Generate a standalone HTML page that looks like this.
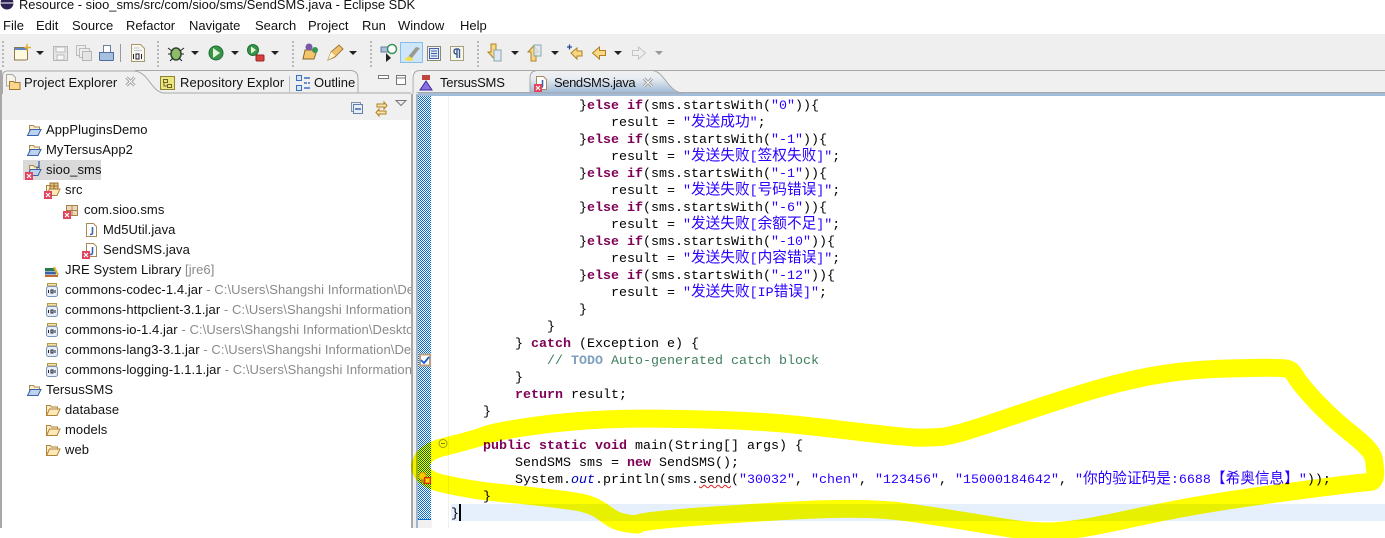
<!DOCTYPE html>
<html><head><meta charset="utf-8"><style>
html,body{margin:0;padding:0;width:1385px;height:538px;overflow:hidden;background:#fff}
body{position:relative;font-family:"Liberation Sans","Noto Sans CJK SC",sans-serif;font-size:13px;color:#111}
.a{position:absolute;white-space:pre;line-height:18px}
.t{position:absolute;white-space:pre;line-height:20px;font-size:13px;letter-spacing:.08px}
.t i{font-style:normal;color:#8a8a8a}
.c{position:absolute;white-space:pre;line-height:17px;height:17px;margin-top:1px;font-family:"Liberation Mono",monospace;font-size:13.33px;color:#000}
.c b{color:#7f0055;font-weight:bold}
.c s{color:#2a00ff;text-decoration:none}
.c u{font-family:"Noto Sans CJK SC",sans-serif;font-size:14.67px;text-decoration:none;color:#2a00ff;line-height:0}
.c em{color:#0000c0}
svg{position:absolute;left:0;top:0}
</style></head><body>
<div style="position:absolute;left:0;top:34px;width:1385px;height:36px;background:#efefef"></div>
<div style="position:absolute;left:0;top:70px;width:412px;height:50px;background:#f0f0f0"></div>
<div style="position:absolute;left:416px;top:70px;width:969px;height:24px;background:#f0f0f0"></div>
<div style="position:absolute;left:413px;top:70px;width:3px;height:458px;background:#efefef"></div>
<div style="position:absolute;left:0;top:70px;width:2px;height:458px;background:#a8a8a8"></div>
<div style="position:absolute;left:411px;top:94px;width:2px;height:434px;background:#a8a8a8"></div>
<div style="position:absolute;left:416px;top:94px;width:2px;height:434px;background:#a3b5ca"></div>
<div style="position:absolute;left:418px;top:93px;width:967px;height:3px;background:#a3bcd9"></div>
<div style="position:absolute;left:418px;top:520px;width:13px;height:8px;background:#f0f0f0"></div>
<div style="position:absolute;left:418px;top:519px;width:13px;height:1px;background:#0a6ad6"></div>
<div style="position:absolute;left:431px;top:96px;width:1px;height:432px;background:#f4f4f4"></div>
<div style="position:absolute;left:448px;top:96px;width:1px;height:432px;background:#efefef"></div>
<div style="position:absolute;left:451px;top:504px;width:934px;height:17px;background:#e6f0fc"></div>
<div style="position:absolute;left:459px;top:504px;width:2px;height:17px;background:#000"></div>
<div style="position:absolute;left:23px;top:160px;width:78px;height:20px;background:#d9d9d9"></div>

<svg width="1385" height="538" viewBox="0 0 1385 538">
<defs>
<pattern id="chk" x="0" y="0" width="2" height="2" patternUnits="userSpaceOnUse"><rect width="2" height="2" fill="#fff"/><rect width="1" height="1" fill="#0a6ad6"/><rect x="1" y="1" width="1" height="1" fill="#0a6ad6"/></pattern>
<g id="err"><rect width="8" height="8" fill="#e2425c"/><path d="M2 2l4 4M6 2l-4 4" stroke="#fff" stroke-width="1.2"/></g>
<g id="fo"><path d="M1.500 13.500V3.500h4l1 1.500h6v2" fill="#fbeecb" stroke="#b3813a"/><path d="M1.500 13.500l3-6.500h10.500l-3 6.500z" fill="#fde9b8" stroke="#b3813a"/></g>
<g id="pf"><path d="M3.500 12V3.500h4l1 1.500h5v2" fill="#fbeecb" stroke="#a88850"/><path d="M1.500 13.500l3-6h10.500l-3 6z" fill="#bcd3f0" stroke="#3a62a8"/></g>
<g id="jar"><rect x="2.500" y="1.500" width="9" height="2.500" fill="#f2dfa8" stroke="#b59a52"/><rect x="1.500" y="4.500" width="11" height="10" rx="2" fill="#e6eef8" stroke="#7f94b0"/><path d="M3.500 8v3M6 8v3h2V8zM10 8v3" stroke="#223" fill="none"/></g>
<g id="jf"><path d="M2.500 1.500h7l3 3v10h-10z" fill="#fff" stroke="#a68a55"/><path d="M8.500 5v6q0 1.500-2.500 1.500" stroke="#3a62a8" stroke-width="1.600" fill="none"/></g>
<g id="arr"><path d="M0 0h8l-4 4z" fill="#222"/></g>
<g id="dots"><path d="M0 0v28" stroke="#b8b8b8" stroke-width="2" stroke-dasharray="2 2"/></g>
<g id="bigx"><path d="M1.500 1.500l8 8M9.500 1.500l-8 8" stroke="#999" stroke-width="3"/><path d="M1.500 1.500l8 8M9.500 1.500l-8 8" stroke="#fff" stroke-width="1"/></g>
</defs>

<rect x="418" y="96" width="13" height="423" fill="url(#chk)" shape-rendering="crispEdges"/>

<!-- eclipse logo -->
<circle cx="7" cy="3" r="6.500" fill="#2c2255"/><path d="M0 3h14" stroke="#fff"/>

<!-- tab outlines -->
<path d="M2.500 94V76q0-5 5-5H134c14 0 18 22 30 22H411" fill="#f0f0f0" stroke="#a8a8a8"/>
<path d="M135 70.500H350q8 0 8 8V93" fill="none" stroke="#a8a8a8"/>
<path d="M289.500 76v17" stroke="#c0c0c0"/>
<path d="M413 94V78q0-7.500 7-7.500H1385M416.500 92.500H1385" fill="none" stroke="#a8a8a8"/>
<path d="M530 93V78q0-7.500 8-7.500h114c12 0 16 22 31 22.500z" fill="url(#g)" stroke="#a8a8a8"/>
<linearGradient id="g" x1="0" y1="0" x2="0" y2="1"><stop offset="0" stop-color="#f1f1f1"/><stop offset=".35" stop-color="#e8ecf2"/><stop offset="1" stop-color="#9db8d6"/></linearGradient>

<!-- toolbar -->
<use href="#dots" x="3" y="41"/><use href="#dots" x="158" y="41"/><use href="#dots" x="293" y="41"/><use href="#dots" x="371" y="41"/><use href="#dots" x="478" y="41"/>
<path d="M120.500 44v18" stroke="#999"/>
<!-- new -->
<path d="M14.500 47.500h13v12q0 .5-4 .5h-9z" fill="#fff9e0" stroke="#8a7a50"/><path d="M15 48h12v2H15z" fill="#5c86c4"/><path d="M27 44v7M24 47.500h7" stroke="#e0b030" stroke-width="1.500"/>
<use href="#arr" x="36" y="51"/>
<!-- save -->
<path d="M53.500 46.500h14v14h-14z" fill="#e6e6e6" stroke="#b5b5b5"/><path d="M56 47h9v5h-9zM57 55h7v5h-7z" fill="#f7f7f7" stroke="#bbb"/>
<path d="M76.500 45.500h9v10h-9z" fill="#eee" stroke="#bbb"/><path d="M79.500 48.500h10v9h-10z" fill="#eee" stroke="#bbb"/><path d="M82.500 51.500h9v9h-9z" fill="#e4e4e4" stroke="#b5b5b5"/>
<!-- print -->
<path d="M103.500 45.500h7v7h-7z" fill="#fff" stroke="#6a7d99"/><path d="M99.500 52.500h14v7q0 1-1 1h-12q-1 0-1-1z" fill="#a8c0e0" stroke="#4e6ea0"/>
<!-- 010 -->
<path d="M131.500 44.500h9l4 4v13h-13z" fill="#f9f6ec" stroke="#a69a70"/><path d="M133.500 54v5M136 54h3v5h-3zM141.500 54v5" stroke="#223" fill="none"/><path d="M134 48h5M134 50.500h8" stroke="#b7c7df"/>
<!-- bug -->
<ellipse cx="176" cy="54" rx="5" ry="6" fill="#8eba6a" stroke="#2e4a2a" stroke-width="1.500"/><path d="M168 48l4 3M184 48l-4 3M168 54h3M184 54h-3M170 61l3-3M182 61l-3-3" stroke="#222"/>
<use href="#arr" x="191" y="51"/>
<!-- run -->
<circle cx="216" cy="53" r="7" fill="#37944a" stroke="#1f6e33"/><path d="M213 48l7 5-7 5z" fill="#e6f4d8"/>
<use href="#arr" x="231" y="51"/>
<!-- ext run -->
<circle cx="253" cy="50" r="5.500" fill="#37944a" stroke="#1f6e33"/><path d="M251 46.500l5 3.500-5 3.500z" fill="#e6f4d8"/><rect x="256" y="55" width="8" height="6" rx="1" fill="#d94040" stroke="#992525"/>
<use href="#arr" x="271" y="51"/>
<!-- open type -->
<path d="M303 59l2-9h12l-3 9z" fill="#f3c56c" stroke="#8a6428"/><circle cx="309" cy="47" r="3.500" fill="#7a58a8"/><circle cx="315" cy="50" r="3" fill="#3a9458"/>
<!-- pencil -->
<path d="M328 60l3-8 8-7 4 4-8 8z" fill="#f0c070" stroke="#a07a3a"/><path d="M328 60l3-8 4 4z" fill="#fff7d0"/>
<use href="#arr" x="349" y="51"/>
<!-- mark -->
<path d="M381 47h9v5h-9z" fill="#a8c0e0" stroke="#6a7d99"/><circle cx="392" cy="49" r="4.500" fill="#fff" stroke="#3a9458" stroke-width="1.500"/><path d="M386 53v9l5-4z" fill="#222"/>
<!-- highlight -->
<rect x="400.500" y="42.500" width="22" height="20" fill="#cfe5fa" stroke="#88bdea"/>
<path d="M407 58l9-11 4 1-8 10z" fill="#9a9a90"/><path d="M404 60l5-4 4 3-1 2z" fill="#f0e040"/>
<!-- block -->
<rect x="427.500" y="46.500" width="13" height="14" fill="#f2f5fa" stroke="#8a8a70"/><rect x="429.500" y="48.500" width="9" height="10" fill="#dfe8f5" stroke="#4060a8"/><path d="M431 51h6M431 53.500h6M431 56h6" stroke="#4060a8"/>
<!-- pilcrow -->
<rect x="450.500" y="46.500" width="13" height="14" fill="#f7f7f2" stroke="#a8a078"/>
<path d="M459 49h-2.500q-2.500 0-2.500 2.500t2.500 2.500h1M457 49v9M459.500 49v9" fill="none" stroke="#3a5a90" stroke-width="1.400"/>
<!-- next/prev annotation -->
<path d="M491 44h5v8h3l-5.500 6-5.500-6h3z" fill="#f7d886" stroke="#b08020"/><path d="M494 50h7v11h-7z" fill="#dfe8f5" stroke="#8aa"/>
<use href="#arr" x="511" y="51"/>
<path d="M531 61v-9h-3l5.500-6 5.500 6h-3v9z" fill="#f7d886" stroke="#b08020"/><path d="M534 45h7v11h-7z" fill="#dfe8f5" stroke="#8aa" fill-opacity=".8"/>
<use href="#arr" x="551" y="51"/>
<!-- back star -->
<path d="M571 53l6-5v3h5v5h-5v3z" fill="#f7d886" stroke="#b08020"/><path d="M567 47h5M569.500 44.500v5" stroke="#2a4a90" stroke-width="1.300"/>
<use href="#arr" x="614" y="51"/>
<path d="M592.500 53l7-6v3.500h6v5h-6v3.500z" fill="#f7d886" stroke="#b08020"/>
<path d="M645.500 53l-7-6v3.500h-6v5h6v3.500z" fill="#eee" stroke="#c4c4c4"/>
<path d="M655 51h8l-4 4z" fill="#999"/>

<!-- view buttons -->
<path d="M378.500 75.500h10v3h-10zM396.500 75.500h9v9h-9z M396.500 78h9" fill="#fff" stroke="#777"/>
<rect x="351.500" y="102.500" width="9" height="9" fill="#e8eef6" stroke="#7f94b0"/><rect x="353.500" y="104.500" width="9" height="9" fill="#e8eef6" stroke="#5f7fa8"/><path d="M355 109h6" stroke="#3a62a8" stroke-width="1.500"/>
<path d="M377 104h7v-2l3 3.500-3 3.500v-2h-7zM386 111h-7v-2l-3 3.500 3 3.500v-2h7z" fill="#f7e6b0" stroke="#b08020"/>
<path d="M396 100.500h10l-5 5z" fill="#eee" stroke="#777"/>

<!-- tab icons -->
<g transform="translate(5,74)"><path d="M1.500.500h6l3 3V12h-9z" fill="#f8f4e8" stroke="#a8a8a8"/><path d="M4.500 15.500V7.500h4l1 1h5.500v7z" fill="#fbd58a" stroke="#a07a30"/></g>
<rect x="160.500" y="76.500" width="14" height="13" fill="#ede67e" stroke="#8a8438"/><path d="M163.500 79.500h4v3h-4zM167.500 84.500h4v3h-4zM164 82v4h3" fill="none" stroke="#6a6428"/>
<path d="M296.500 75.500h5v5h-5zM296.500 85.500h5v5h-5z" fill="#d8e6f6" stroke="#3a70c0"/><path d="M304 78h6M304 83h3M308 83h2M304 88h6" stroke="#3a70c0" stroke-width="1.400"/>
<rect x="422" y="75" width="8" height="5" fill="#c0453c"/><path d="M426 81l6 9h-12z" fill="#8a70e0" stroke="#3a2aa0"/>
<g transform="translate(534,75)"><use href="#jf"/></g><use href="#err" x="534" y="84"/>
<use href="#bigx" x="125" y="76"/><use href="#bigx" x="642.500" y="77"/>

<!-- tree icons -->
<use href="#pf" x="26" y="122"/><use href="#pf" x="26" y="142"/><use href="#pf" x="26" y="162"/><use href="#err" x="25" y="172"/>
<path d="M39 161v5q0 2-3 2" stroke="#3a62a8" stroke-width="1.300" fill="none"/>
<use href="#fo" x="45" y="182"/><use href="#err" x="44" y="191"/><path d="M50 183h8v6h-8zM54 183v6M50 186h8" stroke="#9a6a2a" fill="#e9c88a"/>
<path d="M66.500 205.500h11v10h-11zM72 205v10M66 210.500h11" fill="#ecd8b8" stroke="#a8804a"/><use href="#err" x="63" y="211"/>
<use href="#jf" x="84" y="222"/><use href="#jf" x="84" y="242"/><use href="#err" x="82" y="251"/>
<path d="M45 268h10v3H45zM45 271.500h11v3H45zM45 275h13v2H45z" fill="#2a7a50"/><path d="M45 271.500h11v3H45z" fill="#3a62a8"/><path d="M45 275h13v2H45z" fill="#c06a30"/><path d="M54 267l4 8" stroke="#e0b030" stroke-width="2"/>
<use href="#jar" x="45" y="282"/><use href="#jar" x="45" y="302"/><use href="#jar" x="45" y="322"/><use href="#jar" x="45" y="342"/><use href="#jar" x="45" y="362"/>
<use href="#pf" x="26" y="382"/>
<use href="#fo" x="45" y="402"/><use href="#fo" x="45" y="422"/><use href="#fo" x="45" y="442"/>

<!-- gutter marks -->
<path d="M420 354.500h10v11h-10z" fill="#fff" stroke="#bba27e" stroke-width="2"/><path d="M421 360l3 3 5-6" stroke="#1a5ed0" stroke-width="1.800" fill="none"/>
<circle cx="443" cy="443.500" r="4" fill="#fff" stroke="#a0a0a0"/><path d="M441 443.500h4" stroke="#808080"/>
<circle cx="422.500" cy="476" r="3.500" fill="#f6c860" stroke="#d8a030"/><path d="M421 480h3v3h-3z" fill="#b88a30"/><rect x="424.500" y="477.500" width="6" height="6" fill="#f08030" stroke="#d83020"/><path d="M426 479l3 3M429 479l-3 3" stroke="#fff"/>
</svg>

<div class="a" style="left:19px;top:-4px;font-size:12.9px">Resource - sioo_sms/src/com/sioo/sms/SendSMS.java - Eclipse SDK</div>
<div class="a" style="left:3px;top:17px">File</div>
<div class="a" style="left:36px;top:17px">Edit</div>
<div class="a" style="left:72px;top:17px">Source</div>
<div class="a" style="left:126px;top:17px">Refactor</div>
<div class="a" style="left:189px;top:17px">Navigate</div>
<div class="a" style="left:255px;top:17px">Search</div>
<div class="a" style="left:308px;top:17px">Project</div>
<div class="a" style="left:362px;top:17px">Run</div>
<div class="a" style="left:398px;top:17px">Window</div>
<div class="a" style="left:460px;top:17px">Help</div>

<div class="a" style="left:24px;top:74px;letter-spacing:.05px">Project Explorer</div>
<div class="a" style="left:180px;top:74px;letter-spacing:.1px">Repository Explor</div>
<div class="a" style="left:314px;top:74px;letter-spacing:0">Outline</div>
<div class="a" style="left:440px;top:74px;letter-spacing:-.2px">TersusSMS</div>
<div class="a" style="left:554px;top:74px;letter-spacing:-.4px">SendSMS.java</div>

<div style="position:absolute;left:2px;top:120px;width:409px;height:270px;overflow:hidden">
<div class="t" style="left:44px;top:0">AppPluginsDemo</div>
<div class="t" style="left:44px;top:20px">MyTersusApp2</div>
<div class="t" style="left:44px;top:40px">sioo_sms</div>
<div class="t" style="left:63px;top:60px">src</div>
<div class="t" style="left:82px;top:80px">com.sioo.sms</div>
<div class="t" style="left:101px;top:100px">Md5Util.java</div>
<div class="t" style="left:101px;top:120px">SendSMS.java</div>
<div class="t" style="left:63px;top:140px">JRE System Library <i>[jre6]</i></div>
<div class="t" style="left:63px;top:160px">commons-codec-1.4.jar <i>- C:\Users\Shangshi Information\Desktop\lib</i></div>
<div class="t" style="left:63px;top:180px">commons-httpclient-3.1.jar <i>- C:\Users\Shangshi Information\Desktop</i></div>
<div class="t" style="left:63px;top:200px">commons-io-1.4.jar <i>- C:\Users\Shangshi Information\Desktop\lib</i></div>
<div class="t" style="left:63px;top:220px">commons-lang3-3.1.jar <i>- C:\Users\Shangshi Information\Desktop</i></div>
<div class="t" style="left:63px;top:240px">commons-logging-1.1.1.jar <i>- C:\Users\Shangshi Information\Desktop</i></div>
</div>
<div class="t" style="left:46px;top:380px">TersusSMS</div>
<div class="t" style="left:65px;top:400px">database</div>
<div class="t" style="left:65px;top:420px">models</div>
<div class="t" style="left:65px;top:440px">web</div>

<div class="c" style="left:579px;top:97px">}<b>else</b> <b>if</b>(sms.startsWith(<s>"0"</s>)){</div>
<div class="c" style="left:611px;top:114px">result = <s>"</s><u>发送成功</u><s>"</s>;</div>
<div class="c" style="left:579px;top:131px">}<b>else</b> <b>if</b>(sms.startsWith(<s>"-1"</s>)){</div>
<div class="c" style="left:611px;top:148px">result = <s>"</s><u>发送失败</u><s>[</s><u>签权失败</u><s>]"</s>;</div>
<div class="c" style="left:579px;top:165px">}<b>else</b> <b>if</b>(sms.startsWith(<s>"-1"</s>)){</div>
<div class="c" style="left:611px;top:182px">result = <s>"</s><u>发送失败</u><s>[</s><u>号码错误</u><s>]"</s>;</div>
<div class="c" style="left:579px;top:199px">}<b>else</b> <b>if</b>(sms.startsWith(<s>"-6"</s>)){</div>
<div class="c" style="left:611px;top:216px">result = <s>"</s><u>发送失败</u><s>[</s><u>余额不足</u><s>]"</s>;</div>
<div class="c" style="left:579px;top:233px">}<b>else</b> <b>if</b>(sms.startsWith(<s>"-10"</s>)){</div>
<div class="c" style="left:611px;top:250px">result = <s>"</s><u>发送失败</u><s>[</s><u>内容错误</u><s>]"</s>;</div>
<div class="c" style="left:579px;top:267px">}<b>else</b> <b>if</b>(sms.startsWith(<s>"-12"</s>)){</div>
<div class="c" style="left:611px;top:284px">result = <s>"</s><u>发送失败</u><s>[IP</s><u>错误</u><s>]"</s>;</div>
<div class="c" style="left:579px;top:301px">}</div>
<div class="c" style="left:547px;top:318px">}</div>
<div class="c" style="left:515px;top:335px">} <b>catch</b> (Exception e) {</div>
<div class="c" style="left:547px;top:352px;color:#3f7f5f">// <span style="color:#7f9fbf;font-weight:bold">TODO</span> Auto-generated catch block</div>
<div class="c" style="left:515px;top:369px">}</div>
<div class="c" style="left:515px;top:386px"><b>return</b> result;</div>
<div class="c" style="left:483px;top:403px">}</div>
<div class="c" style="left:483px;top:437px"><b>public</b> <b>static</b> <b>void</b> main(String[] args) {</div>
<div class="c" style="left:515px;top:454px">SendSMS sms = <b>new</b> SendSMS();</div>
<div class="c" style="left:515px;top:471px">System.<em style="font-style:italic">out</em>.println(sms.<span style="text-decoration:underline wavy #e02020;text-decoration-thickness:1px">send</span>(<s>"30032"</s>, <s>"chen"</s>, <s>"123456"</s>, <s>"15000184642"</s>, <s>"</s><u>你的验证码是</u><s>:6688</s><u>【希奥信息】</u><s>"</s>));</div>
<div class="c" style="left:483px;top:488px">}</div>
<div class="c" style="left:451px;top:505px">}</div>

<svg width="1385" height="538" viewBox="0 0 1385 538" style="mix-blend-mode:multiply;pointer-events:none">
<path d="M420 466C422 456 430 451 440 448S470 441 483 436S540 424 580 421S660 418 720 420S800 425 860 432S920 438 940 437S1020 412 1090 391S1200 369 1250 368S1288 368 1300 383S1320 406 1335 420S1372 447 1374 460S1376 482 1370 482S1300 490 1238 499S1140 517 1100 525S1040 532 1022 530S950 518 905 512S807 509 707 516S650 526 632 524S612 518 600 510S573 501 540 497S483 493 440 483C430 480 421 476 420 466Z" fill="none" stroke="#ffff00" stroke-width="18" stroke-linejoin="round"/>
</svg>
</body></html>
